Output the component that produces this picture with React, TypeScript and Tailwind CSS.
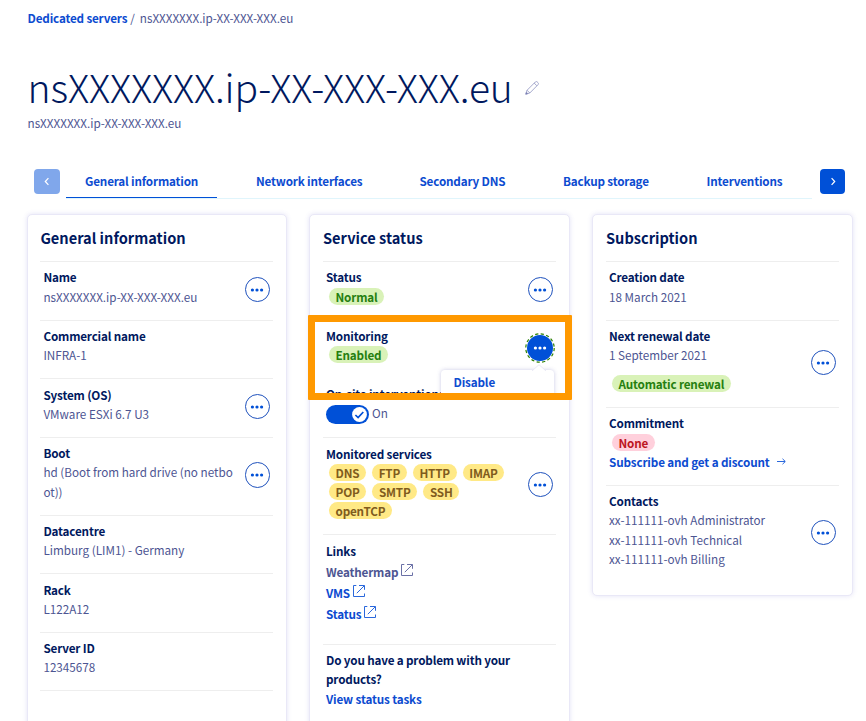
import type { ReactNode } from "react";

function Dots({ active = false }: { active?: boolean }) {
  return (
    <button
      className={
        active
          ? "relative flex h-[26px] w-[26px] shrink-0 items-center justify-center rounded-full bg-[#0050d7]"
          : "flex h-[25.5px] w-[25.5px] shrink-0 items-center justify-center rounded-full border border-[#1f52bd] bg-white"
      }
    >
      {active && (
        <svg className="absolute -top-[2px] -left-[2px]" width="30" height="30" viewBox="0 0 30 30" fill="none">
          <circle cx="15" cy="15" r="14.2" stroke="#2b8000" strokeWidth="1.2" strokeDasharray="3.2 2.4" />
        </svg>
      )}
      <svg width="14" height="4" viewBox="0 0 14 4" fill={active ? "#fff" : "#0050d7"}>
        <circle cx="2.4" cy="2" r="1.6" />
        <circle cx="7" cy="2" r="1.6" />
        <circle cx="11.6" cy="2" r="1.6" />
      </svg>
    </button>
  );
}

function Row({
  title,
  children,
  height,
  dots = false,
  active = false,
  line = true,
  text = "pt-[5px] pl-[3px]",
}: {
  title: string;
  children: ReactNode;
  height: string;
  dots?: boolean;
  active?: boolean;
  line?: boolean;
  text?: string;
}) {
  return (
    <section className={`flex justify-between border-t pr-[3px] ${line ? "border-[#eeeeee]" : "border-transparent"} ${height}`}>
      <div className={`w-[197px] ${text}`}>
        <h3 className="leading-[19px] font-bold tracking-[-0.17px] whitespace-pre-line text-[#00185e]">{title}</h3>
        {children}
      </div>
      {dots && (
        <div className="flex items-center pb-[3px]">
          <Dots active={active} />
        </div>
      )}
    </section>
  );
}

function Card({ title, children, className }: { title: string; children: ReactNode; className: string }) {
  return (
    <article className={`shrink-0 rounded-[5px] border border-[#e9e8f7] bg-white shadow-[0_0_5px_rgba(90,80,200,0.16)] ${className}`}>
      <h2 className="h-[46px] pt-[11px] text-[14.6px] leading-[24px] font-bold text-[#00185e]">{title}</h2>
      {children}
    </article>
  );
}

function Badge({ children, tone }: { children: ReactNode; tone: "green" | "yellow" | "red" }) {
  const tones = {
    green: "bg-[#d9f2b8] text-[#267f10]",
    yellow: "bg-[#ffe986] text-[#805b1d]",
    red: "bg-[#ffd0dc] text-[#bd1622]",
  };
  return (
    <span className={`inline-flex h-[17px] items-center rounded-full px-[6.5px] font-bold tracking-[-0.17px] ${tones[tone]}`}>{children}</span>
  );
}

function External({ children, className, stroke }: { children: ReactNode; className: string; stroke: string }) {
  return (
    <a className={`flex h-[21px] items-center gap-[3px] font-bold tracking-[-0.17px] ${className}`}>
      <span>{children}</span>
      <svg className="mb-[3px]" width="12" height="12" viewBox="0 0 12 12" fill="none" stroke={stroke}>
        <path d="M3.3.5H.5v11h11V8.5M6 .5h5.5v4.3M11.3.7 3.8 8.2" />
      </svg>
    </a>
  );
}

export default function App() {
  return (
    <main className="h-[721px] w-[866px] overflow-hidden bg-white font-['Noto_Sans_CJK_SC','Noto_Sans_CJK_JP',sans-serif] text-[11.7px] leading-[19.5px] text-[#4d5592]">
      <nav className="flex h-[28px] pt-[8px] pl-[27.5px]">
        <a className="font-bold tracking-[-0.17px] text-[#0c4bd0]">Dedicated servers</a>
        <span className="pl-[3px]">/</span>
        <span className="pl-[5px] tracking-[-0.02px]">nsXXXXXXX.ip-XX-XXX-XXX.eu</span>
      </nav>
      <header className="h-[105px] pt-[33px] pl-[27.5px]">
        <div className="flex h-[52px] items-start">
          <h1 className="text-[39px] leading-[50px] font-light tracking-[-0.11px] text-[#00185e]">nsXXXXXXX.ip-XX-XXX-XXX.eu</h1>
          <svg className="mt-[20px] ml-[12.5px]" width="14" height="14" viewBox="0 0 14 14" fill="none" stroke="#8e93c0" strokeWidth=".8">
            <path d="M.8 13.2 2 9.3 10.3 1a1.4 1.4 0 0 1 2 0l.7.7a1.4 1.4 0 0 1 0 2L4.8 12Zm1.2-4L4.8 12M9.2 2.1l2.7 2.7" />
            <path d="m.8 13.2.6-2 1.4 1.4Z" fill="#4d5592" />
          </svg>
        </div>
        <p>nsXXXXXXX.ip-XX-XXX-XXX.eu</p>
      </header>
      <div className="mt-[32px] flex h-[34px] items-start pl-[34px]">
        <button className="mt-[4px] mr-[6px] flex h-[25px] w-[26px] items-center justify-center rounded-[4px] bg-[#80a7eb]">
          <svg width="6" height="9" viewBox="0 0 6 9" fill="none" stroke="#fff" strokeWidth="1.2"><path d="M4.4 1.2 1.3 4.5l3.1 3.3" /></svg>
        </button>
        <div className="flex h-[34px] w-[746px] gap-[19.5px] border-b border-[#e0f5fc] font-bold tracking-[-0.17px] text-[#0c4bd0]">
          <a className="h-[33px] w-[151px] border-b border-[#0050d7] pt-[6px] pl-[19px]">General information</a>
          <a className="w-[144px] pt-[6px] pl-[19.5px]">Network interfaces</a>
          <a className="w-[124px] pt-[6px] pl-[19.5px]">Secondary DNS</a>
          <a className="w-[124px] pt-[6px] pl-[19.5px]">Backup storage</a>
          <a className="w-[105px] pt-[6px] pl-[19.5px]">Interventions</a>
        </div>
        <button className="mt-[4px] ml-[8px] flex h-[25px] w-[25px] items-center justify-center rounded-[4px] bg-[#0050d7]">
          <svg width="6" height="9" viewBox="0 0 6 9" fill="none" stroke="#fff" strokeWidth="1.2"><path d="m1.6 1.2 3.1 3.3-3.1 3.3" /></svg>
        </button>
      </div>
      <div className="flex items-start pt-[15px] pl-[27px]">
        <Card title="General information" className="h-[540px] w-[260px] pr-[13px] pl-[12.4px]">
          <Row title="Name" height="h-[59px]" dots><p className="pt-[1px]">nsXXXXXXX.ip-XX-XXX-XXX.eu</p></Row>
          <Row title="Commercial name" height="h-[58px]">INFRA-1</Row>
          <Row title="System (OS)" height="h-[59px]" text="pt-[6px] pl-[3px]" dots>VMware ESXi 6.7 U3</Row>
          <Row title="Boot" height="h-[78px]" dots><span className="block w-[192px] break-all">hd (Boot from hard drive (no netboot))</span></Row>
          <Row title="Datacentre" height="h-[58px]">Limburg (LIM1) - Germany</Row>
          <Row title="Rack" height="h-[59px]" text="pt-[6px] pl-[3px]">L122A12</Row>
          <Row title="Server ID" height="h-[58px]">12345678</Row>
          <div className="border-t border-[#eeeeee]" />
        </Card>
        <Card title="Service status" className="relative ml-[22px] h-[540px] w-[261px] pr-[13px] pl-[13px]">
          <Row title="Status" height="h-[59px]" dots>
            <div className="pt-[1px] pl-[3px]"><Badge tone="green">Normal</Badge></div>
          </Row>
          <Row title="Monitoring" height="h-[58px]" dots active line={false}>
            <div className="pl-[3px]"><Badge tone="green">Enabled</Badge></div>
          </Row>
          <Row title="On-site interventions" height="h-[59px]" text="pt-[5px] pl-[3px]" line={false}>
            <div className="flex pt-[2px]">
              <span className="flex h-[19px] w-[43px] items-center justify-end rounded-full bg-[#0050d7] pr-[2.5px]">
                <svg width="15" height="15" viewBox="0 0 15 15" fill="none"><circle cx="7.5" cy="7.5" r="7.4" fill="#fff" /><path d="m3.4 8 2.7 2.6 5.2-5.6" stroke="#0050d7" strokeWidth="1.7" /></svg>
              </span>
              <span className="-mt-[2px] pl-[3px]">On</span>
            </div>
          </Row>
          <Row title="Monitored services" height="h-[97px]" text="pt-[6px] pl-[3px]" dots>
            <div className="flex flex-wrap gap-x-[6.3px] gap-y-[2px] pt-[1.4px] pl-[3px]">
              {["DNS", "FTP", "HTTP", "IMAP", "POP", "SMTP", "SSH", "openTCP"].map((s) => (
                <Badge key={s} tone="yellow">{s}</Badge>
              ))}
            </div>
          </Row>
          <Row title="Links" height="h-[110px]" text="pt-[6px] pl-[3px]">
            <div className="pt-[1px]">
              <External className="text-[#4d5592]" stroke="#6a70a6">Weathermap</External>
              <External className="text-[#0c4bd0]" stroke="#2a68dc">VMS</External>
              <External className="text-[#0c4bd0]" stroke="#2a68dc">Status</External>
            </div>
          </Row>
          <Row title={"Do you have a problem with your\nproducts?"} height="h-[80px]">
            <a className="block pt-[1px] font-bold tracking-[-0.15px] text-[#0c4bd0]">View status tasks</a>
          </Row>
          <div className="absolute top-[155px] left-[131px] h-[25px] w-[113px] rounded-t-[4px] bg-white pl-[12.5px] shadow-[0_0_4px_rgba(80,80,170,0.3)]">
            <svg className="absolute -top-[6px] left-[91px]" width="14" height="7" viewBox="0 0 14 7"><path d="M0 7 7 .7 14 7" fill="#fff" stroke="#e4e4f2" strokeWidth=".8" /></svg>
            <a className="leading-[24px] font-bold tracking-[-0.15px] text-[#0c4bd0]">Disable</a>
          </div>
          <div className="absolute top-[100px] -left-[2px] h-[85px] w-[264px] rounded-[1px] border-[7px] border-[#ff9900]" />
        </Card>
        <Card title="Subscription" className="ml-[22px] h-[382px] w-[261px] pr-[13px] pl-[13px]">
          <Row title="Creation date" height="h-[59px]"><p className="pt-[1px]">18 March 2021</p></Row>
          <Row title="Next renewal date" height="h-[87px]" dots>
            1 September 2021
            <div className="pt-[9px] pl-[3px]"><Badge tone="green">Automatic renewal</Badge></div>
          </Row>
          <Row title="Commitment" height="h-[78px]">
            <div className="h-[20px] pt-[1px] pl-[3px]"><Badge tone="red">None</Badge></div>
            <a className="flex items-center gap-[7.5px] font-bold tracking-[-0.15px] text-[#0c4bd0]">
              Subscribe and get a discount
              <svg width="9" height="7" viewBox="0 0 9 7" fill="none" stroke="#2a68dc"><path d="M0 3.5h8M5.5.8l2.8 2.7-2.8 2.7" /></svg>
            </a>
          </Row>
          <Row title="Contacts" height="h-[97px]" dots>
            <p>xx-111111-ovh Administrator</p>
            <p>xx-111111-ovh Technical</p>
            <p>xx-111111-ovh Billing</p>
          </Row>
        </Card>
      </div>
    </main>
  );
}
